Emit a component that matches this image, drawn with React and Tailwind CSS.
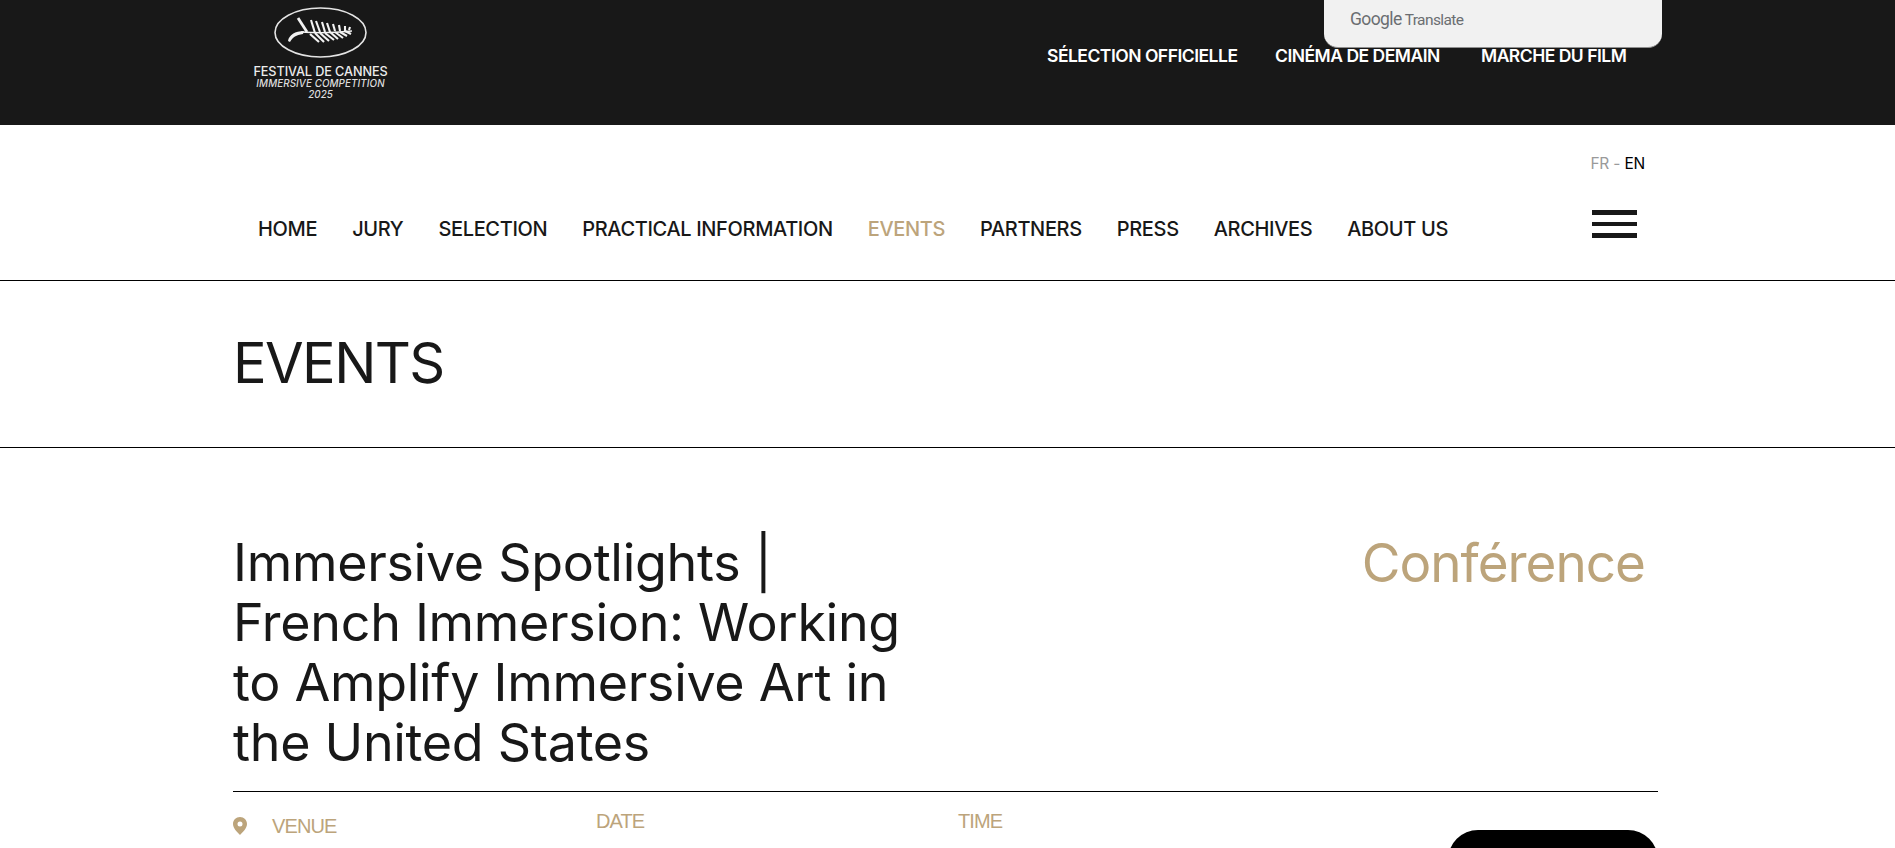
import React from "react";

const sans = "font-['Inter','Liberation_Sans',sans-serif]";

const topLinks = [
  { label: "SÉLECTION OFFICIELLE", width: "w-[190px]" },
  { label: "CINÉMA DE DEMAIN", width: "w-[168px]" },
  { label: "MARCHÉ DU FILM", width: "w-[145px]" },
];

const mainLinks = ["HOME", "JURY", "SELECTION", "PRACTICAL INFORMATION", "EVENTS", "PARTNERS", "PRESS", "ARCHIVES", "ABOUT US"];

// leaflets of the palm, root on the stem then tip
const leaflets = [
  "M41 26 L37 13", "M46 25 L42 14", "M51 25 L48 15", "M56 25 L53 16", "M61 24 L59 17", "M66 24 L65 18", "M71 24 L71 19", "M75 23 L76 20",
  "M36 27 L45 35", "M41 26 L50 35", "M46 26 L55 34", "M51 26 L60 33", "M56 25 L64 32", "M61 25 L69 31", "M66 25 L73 29", "M71 24 L77 27",
];

const PalmLogo = () => (
  <svg width="93" height="51" viewBox="0 0 93 51" fill="none" className="block">
    <ellipse cx="46.5" cy="25.5" rx="45.5" ry="24.5" stroke="#e4e4e4" strokeWidth="1.6" />
    <path d="M27 25 C40 26 60 26 78 24" stroke="#f2f2f2" strokeWidth="1.6" />
    <path d="M14 34 C15 28 21 24 30 24 L29 27 C22 28 19 30 16 35 Z" fill="#f2f2f2" />
    <path d="M24 11 L33 25" stroke="#f2f2f2" strokeWidth="2.8" />
    {leaflets.map((d) => (
      <path key={d} d={d} stroke="#f2f2f2" strokeWidth="2.1" />
    ))}
  </svg>
);

const App = () => {
  return (
    <div className={`h-screen overflow-hidden bg-white text-[#181818] ${sans}`}>
      <header className="relative flex h-[125px] justify-between bg-[#181818] pl-[253px] pr-[269px]">
        <div className="flex w-[135px] flex-col items-center pt-[7px] text-white">
          <PalmLogo />
          <p className="mt-[7px] whitespace-nowrap text-[12.7px] font-medium leading-[13px] tracking-[-0.1px] text-[#ececec]">FESTIVAL DE CANNES</p>
          <p className="whitespace-nowrap text-[9.8px] font-medium leading-[12px] italic tracking-[0.1px] text-[#dddddd]">IMMERSIVE COMPETITION</p>
          <p className="text-[9.8px] font-medium leading-[10px] italic text-[#dddddd]">2025</p>
        </div>
        <nav className="flex h-[112px] items-center gap-[38px]">
          {topLinks.map((link) => (
            <a key={link.label} className={`${link.width} whitespace-nowrap text-[17.5px] font-semibold tracking-[-0.5px] text-white`}>
              {link.label}
            </a>
          ))}
        </nav>
        <div className="absolute left-[1324px] top-0 h-[48px] w-[338px] rounded-b-[14px] border-b border-[#8e8e8e] bg-[#f1f1f1] pl-[26px] pt-[9px]">
          <div className="flex items-baseline gap-[3px] font-['Roboto',sans-serif] text-[#6b6e71]">
            <span className="text-[17.5px] leading-[20px] tracking-[-0.6px]">Google</span>
            <span className="text-[15.5px] leading-[20px] tracking-[-0.6px]">Translate</span>
          </div>
        </div>
      </header>

      <section className="flex h-[156px] border-b border-black pl-[258px] pr-[250px]">
        <nav className="flex h-[155px] flex-1 items-center gap-[35px] pt-[52px]">
          {mainLinks.map((link) => (
            <a key={link} className={`whitespace-nowrap text-[20px] font-medium tracking-[-0.35px] ${link === "EVENTS" ? "text-[#bca47b]" : "text-[#181818]"}`}>
              {link}
            </a>
          ))}
        </nav>
        <div className="flex flex-col items-end">
          <p className="mt-[29px] text-[15.5px] leading-[19px] tracking-[-0.2px] text-[#9a9a9a]">
            FR - <span className="text-black">EN</span>
          </p>
          <button className="mr-[8px] mt-[37px] flex w-[45px] flex-col gap-[7px]">
            <span className="h-[4.5px] bg-[#181818]" />
            <span className="h-[4.5px] bg-[#181818]" />
            <span className="h-[4.5px] bg-[#181818]" />
          </button>
        </div>
      </section>

      <section className="flex h-[167px] items-center border-b border-black pb-[2px] pl-[233px]">
        <h1 className="text-[56px] font-normal leading-[60px] tracking-[-1.6px]">EVENTS</h1>
      </section>

      <main className="ml-[233px] w-[1425px]">
        <div className="flex h-[343px] justify-between pr-[13px] pt-[85px]">
          <h2 className="w-[700px] text-[52px] font-normal leading-[60px] tracking-[-0.3px]">
            Immersive Spotlights | French Immersion: Working to Amplify Immersive Art in the United States
          </h2>
          <p className="text-[53px] leading-[60px] tracking-[-1px] text-[#bca47b]">Conférence</p>
        </div>
        <div className="flex items-start border-t border-black font-['Liberation_Sans',sans-serif] text-[20px] leading-[24px] tracking-[-0.9px] text-[#bca47b]">
          <div className="flex w-[363px] items-center gap-[25px] pt-[22px]">
            <svg width="14" height="18" viewBox="0 0 14 18" fill="#bca47b">
              <path fillRule="evenodd" d="M7 0 C3 0 0 3 0 7 C0 11 4 15 7 18 C10 15 14 11 14 7 C14 3 11 0 7 0 Z M7 4.5 A2.5 2.5 0 1 1 7 9.5 A2.5 2.5 0 1 1 7 4.5 Z" />
            </svg>
            <span>VENUE</span>
          </div>
          <div className="w-[362px] pt-[17px]">DATE</div>
          <div className="flex-1 pt-[17px]">TIME</div>
          <div className="mt-[38px] h-[60px] w-[210px] rounded-[30px] bg-black" />
        </div>
      </main>
    </div>
  );
};

export default App;
